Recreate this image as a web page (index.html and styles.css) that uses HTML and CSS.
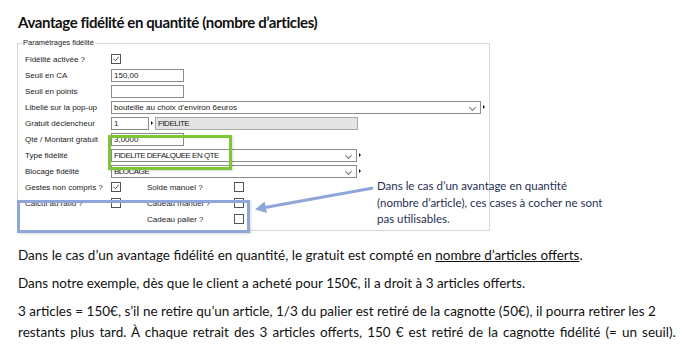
FILE: index.html
```html
<!DOCTYPE html>
<html lang="fr">
<head>
    <meta charset="UTF-8">
    <title>Avantage fidélité en quantité</title>
    <link rel="stylesheet" href="styles.css">
</head>
<body>
<div class="doc">
    <h1>Avantage fidélité en quantité (nombre d’articles)</h1>

    <div class="figure">
        <fieldset class="group">
            <legend>Paramétrages fidélité</legend>

            <div class="row">
                <span class="lbl">Fidélité activée ?</span>
                <span class="check on"><svg viewBox="0 0 10 10"><path d="M1.8 4.8 L4.2 7.4 L8.4 2.2"/></svg></span>
            </div>
            <div class="row">
                <span class="lbl">Seuil en CA</span>
                <span class="field small">150,00</span>
            </div>
            <div class="row">
                <span class="lbl">Seuil en points</span>
                <span class="field small"></span>
            </div>
            <div class="row">
                <span class="lbl">Libellé sur la pop-up</span>
                <span class="field combo wide">bouteille au choix d'environ 6euros<i class="chev"></i></span>
                <span class="mark"></span>
            </div>
            <div class="row">
                <span class="lbl">Gratuit déclencheur</span>
                <span class="field tiny">1</span>
                <span class="mark"></span>
                <span class="field locked caps">FIDELITE</span>
            </div>
            <div class="row">
                <span class="lbl">Qté / Montant gratuit</span>
                <span class="field small">3,0000</span>
            </div>
            <div class="row">
                <span class="lbl">Type fidélité</span>
                <span class="field combo mid caps">FIDELITE DEFALQUEE EN QTE<i class="chev"></i></span>
                <span class="mark"></span>
            </div>
            <div class="row">
                <span class="lbl">Blocage fidélité</span>
                <span class="field combo mid caps">BLOCAGE<i class="chev"></i></span>
                <span class="mark"></span>
            </div>
            <div class="row">
                <span class="lbl">Gestes non compris ?</span>
                <span class="check on"><svg viewBox="0 0 10 10"><path d="M1.8 4.8 L4.2 7.4 L8.4 2.2"/></svg></span>
                <span class="sub">Solde manuel ?</span>
                <span class="check"></span>
            </div>
            <div class="row">
                <span class="lbl">Calcul au ratio ?</span>
                <span class="check"></span>
                <span class="sub">Cadeau manuel ?</span>
                <span class="check"></span>
            </div>
            <div class="row">
                <span class="lbl"></span>
                <span class="check blank"></span>
                <span class="sub">Cadeau palier ?</span>
                <span class="check"></span>
            </div>
        </fieldset>

        <!-- annotations posées sur la capture -->
        <div class="hl hl-green"></div>
        <div class="hl hl-blue"></div>
        <svg class="arrow" width="480" height="200" viewBox="0 0 480 200">
            <line x1="356" y1="150" x2="248" y2="169.5"/>
            <polygon points="238,171.5 250,175 247.6,163.5"/>
        </svg>
        <p class="note">Dans le cas d’un avantage en quantité (nombre d’article), ces cases à cocher ne sont pas utilisables.</p>
    </div>

    <div class="text">
        <p>Dans le cas d’un avantage fidélité en quantité, le gratuit est compté en <u>nombre d’articles offerts</u>.</p>
        <p>Dans notre exemple, dès que le client a acheté pour 150€, il a droit à 3 articles offerts.</p>
        <p>3 articles = 150€, s’il ne retire qu’un article, 1/3 du palier est retiré de la cagnotte (50€), il pourra retirer les 2<br><span class="spread">restants plus tard. À chaque retrait des 3 articles offerts, 150 € est retiré de la cagnotte fidélité (= un seuil).</span></p>
    </div>
</div>
</body>
</html>
```
FILE: styles.css
```css
body {
    margin: 0;
    background: #fff;
    color: #111;
    font-family: Lato, "Open Sans", sans-serif;
    overflow: hidden;
}

.doc {
    padding: 12px 0 0 18px;
}

h1 {
    margin: 0;
    font-size: 15px;
    line-height: 20px;
    font-weight: bold;
    letter-spacing: -0.4px;
    color: #111;
}

.figure {
    position: relative;
    margin: 6px 0 0 -1px;
    width: 473px;
}

.group {
    margin: 1px 0 0 0;
    padding: 3px 0 3px 7px;
    border: 1px solid #d6d6d6;
    font-family: "Liberation Sans", Arial, sans-serif;
    font-size: 8px;
    color: #1a1a1a;
}

.group legend {
    margin-left: -3px;
    padding: 0 1px;
    font-size: 7.5px;
    line-height: 10px;
}

.row {
    display: flex;
    align-items: center;
    height: 16px;
}

.lbl {
    width: 86px;
    flex: none;
}

.field {
    box-sizing: border-box;
    height: 13px;
    line-height: 11px;
    padding: 0 2px;
    border: 1px solid #8a8a8a;
    background: #fff;
    white-space: nowrap;
    position: relative;
}

.caps {
    letter-spacing: -0.5px;
}

.small { width: 73px; }
.tiny { width: 38px; }
.wide { width: 370px; }
.mid { width: 246px; }

.locked {
    width: 203px;
    background: #e4e4e4;
    border-color: #a8a8a8;
}

.chev {
    position: absolute;
    right: 5px;
    top: 3px;
    width: 4px;
    height: 4px;
    border-right: 1px solid #777;
    border-bottom: 1px solid #777;
    transform: rotate(45deg);
}

.mark {
    width: 0;
    height: 0;
    margin: 0 2px 0 2px;
    border-left: 2px solid #111;
    border-top: 2px solid transparent;
    border-bottom: 2px solid transparent;
}

.check {
    box-sizing: border-box;
    width: 10px;
    height: 10px;
    flex: none;
    border: 1px solid #555;
    background: #fff;
}

.check svg {
    display: block;
    width: 8px;
    height: 8px;
    fill: none;
    stroke: #444;
    stroke-width: 1.1;
}

.check.blank {
    border: none;
    background: none;
}

.sub {
    width: 87px;
    margin-left: 26px;
    flex: none;
}

.hl {
    position: absolute;
    box-sizing: border-box;
    border: 3px solid;
    box-shadow: 1px 1px 2px rgba(0, 0, 0, 0.15);
}

.hl-green {
    left: 91px;
    top: 97px;
    width: 124px;
    height: 35px;
    border-color: #7ec635;
}

.hl-blue {
    left: 0;
    top: 162px;
    width: 233px;
    height: 33px;
    border-color: #8fa6d8;
}

.arrow {
    position: absolute;
    left: 0;
    top: 0;
    pointer-events: none;
}

.arrow line {
    stroke: #8fa6d8;
    stroke-width: 3;
}

.arrow polygon {
    fill: #8fa6d8;
}

.note {
    position: absolute;
    left: 360px;
    top: 140px;
    width: 226px;
    margin: 0;
    font-size: 11.5px;
    line-height: 16.5px;
    color: #1f2f55;
}

.text {
    margin-top: 14px;
}

.text p {
    margin: 0 0 7px;
    font-size: 13.5px;
    line-height: 21px;
    white-space: nowrap;
}

.text .spread {
    word-spacing: 1.6px;
}
```
